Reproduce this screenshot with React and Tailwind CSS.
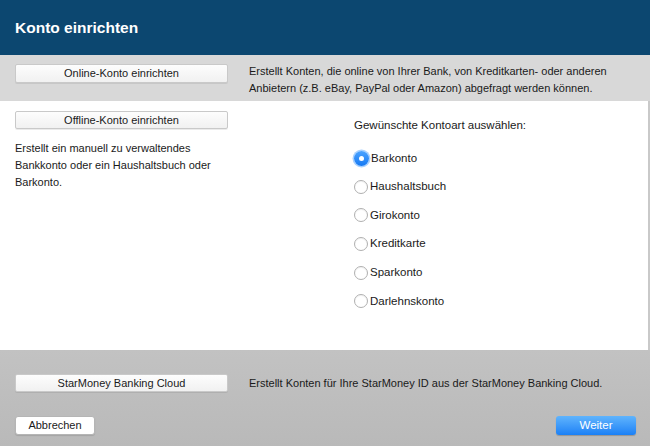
const kontoarten = [
  "Barkonto",
  "Haushaltsbuch",
  "Girokonto",
  "Kreditkarte",
  "Sparkonto",
  "Darlehnskonto",
];

function MacButton({ children, className = "" }) {
  return (
    <div
      className={`flex items-center justify-center rounded-[2px] border border-[#c9c9c9] bg-gradient-to-b from-[#fdfdfd] to-[#f1f1f1] text-[11px] text-[#1a1a1a] shadow-[0_1px_0_rgba(0,0,0,0.08)] ${className}`}
    >
      {children}
    </div>
  );
}

function Radio({ checked, label }) {
  return (
    <div className="flex h-[28.6px] items-center">
      {checked ? (
        <div className="flex h-[15px] w-[15px] items-center justify-center rounded-full bg-gradient-to-b from-[#4aa3ff] to-[#1279f3] shadow-[0_0_0_1.5px_rgba(60,150,255,0.45)]">
          <div className="h-[5px] w-[5px] rounded-full bg-white" />
        </div>
      ) : (
        <div className="h-[14px] w-[14px] rounded-full border border-[#b0b0b0] bg-white shadow-[inset_0_1px_1px_rgba(0,0,0,0.06)]" />
      )}
      <span className="ml-[2px] text-[11.5px] text-[#1a1a1a]">{label}</span>
    </div>
  );
}

export default function App() {
  return (
    <div
      className="flex h-[446px] w-[650px] flex-col overflow-hidden bg-white"
      style={{ fontFamily: '"Liberation Sans", Arial, sans-serif' }}
    >
      {/* Header */}
      <div className="flex h-[55px] shrink-0 items-center bg-[#0c4770] px-[15px]">
        <h1 className="text-[15.5px] font-bold text-white">Konto einrichten</h1>
      </div>

      {/* Online */}
      <div className="flex h-[46px] shrink-0 items-start bg-[#d8d8d8] pt-[9px]">
        <MacButton className="ml-[15px] h-[19px] w-[213px] shrink-0">Online-Konto einrichten</MacButton>
        <p className="ml-[21px] mt-[-1px] text-[11px] leading-[17px] text-[#1a1a1a]">
          Erstellt Konten, die online von Ihrer Bank, von Kreditkarten- oder anderen
          <br />
          Anbietern (z.B. eBay, PayPal oder Amazon) abgefragt werden können.
        </p>
      </div>

      {/* Offline */}
      <div className="flex h-[249px] shrink-0 border-r-2 border-[#c9c9c9] bg-white">
        <div className="w-[354px] shrink-0 pl-[15px] pt-[10px]">
          <MacButton className="h-[18px] w-[213px]">Offline-Konto einrichten</MacButton>
          <p className="mt-[11px] text-[11px] leading-[17px] text-[#1a1a1a]">
            Erstellt ein manuell zu verwaltendes
            <br />
            Bankkonto oder ein Haushaltsbuch oder
            <br />
            Barkonto.
          </p>
        </div>
        <div className="pt-[16px]">
          <p className="text-[11.5px] leading-[17px] text-[#1a1a1a]">Gewünschte Kontoart auswählen:</p>
          <div className="mt-[10px] flex flex-col">
            {kontoarten.map((k, i) => (
              <Radio key={k} label={k} checked={i === 0} />
            ))}
          </div>
        </div>
      </div>

      {/* Cloud + footer */}
      <div className="flex flex-1 flex-col bg-gradient-to-b from-[#c2c2c2] to-[#b9b9b9] px-[15px]">
        <div className="mt-[24px] flex items-center">
          <MacButton className="h-[18px] w-[213px] shrink-0">StarMoney Banking Cloud</MacButton>
          <p className="ml-[21px] text-[11px] text-[#1a1a1a]">
            Erstellt Konten für Ihre StarMoney ID aus der StarMoney Banking Cloud.
          </p>
        </div>
        <div className="mt-[24px] flex items-center justify-between">
          <div className="flex h-[19px] w-[80px] items-center justify-center rounded-[3px] border border-[#b5b5b5] bg-white text-[11px] text-[#1a1a1a] shadow-[0_1px_1px_rgba(0,0,0,0.12)]">
            Abbrechen
          </div>
          <div className="mr-[-1px] flex h-[19px] w-[80px] items-center justify-center rounded-[3px] bg-gradient-to-b from-[#5fb4fd] to-[#1a80f5] text-[11.5px] text-white shadow-[0_1px_1px_rgba(0,0,0,0.2)]">
            Weiter
          </div>
        </div>
      </div>
    </div>
  );
}
